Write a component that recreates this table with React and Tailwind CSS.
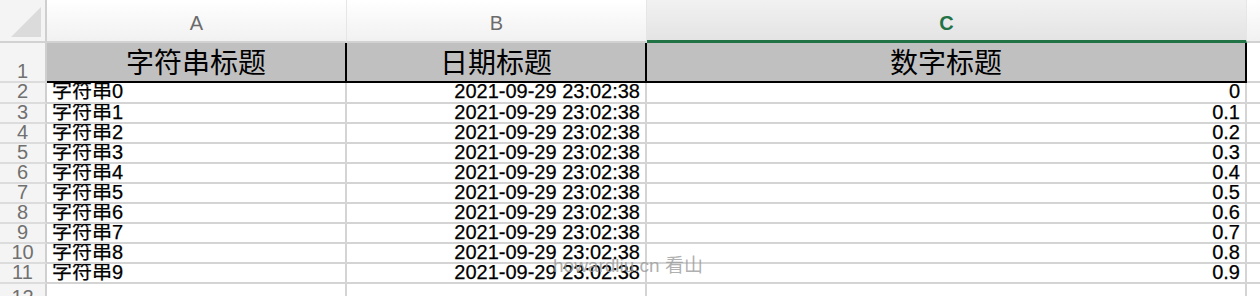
const font = { fontFamily: '"Liberation Sans", "Noto Sans CJK SC", sans-serif' };

const rows = Array.from({ length: 10 }, (_, i) => ({
  n: i + 2,
  s: `字符串${i}`,
  d: "2021-09-29 23:02:38",
  v: i === 0 ? "0" : `0.${i}`,
}));

const ColHead = ({ label, active }) => (
  <div
    className={
      active
        ? "w-[600px] h-full flex justify-center pt-[13px] bg-gradient-to-b from-[#f1f1f1] to-[#e4e4e4] border-b-[3px] border-[#217346] border-r border-r-[#e6e6e6]"
        : "w-[300px] h-full flex justify-center pt-[13px] bg-gradient-to-b from-[#ffffff] to-[#f1f1f1] border-b-2 border-b-[#d2d2d2] border-r border-r-[#e6e6e6]"
    }
  >
    <span
      className={
        active
          ? "text-[20px] leading-[20px] font-bold text-[#217346]"
          : "text-[20px] leading-[20px] text-[#6b6b6b]"
      }
    >
      {label}
    </span>
  </div>
);

const cellText = "text-[20px] leading-[16px] text-black whitespace-nowrap [-webkit-text-stroke:0.25px_black]";

const DataRow = ({ r, first }) => (
  <div className={first ? "flex h-[21px]" : "flex h-[20px]"}>
    <div className="w-[47px] bg-[#f4f4f4] border-r-2 border-r-[#cfcfcf] border-b-2 border-b-[#dcdcdc] overflow-hidden flex justify-center">
      <span className="text-[20px] leading-[16px] text-[#707070]">{r.n}</span>
    </div>
    <div className="w-[300px] border-r-2 border-b-2 border-[#d4d4d4] overflow-hidden pl-[5px]">
      <div className={cellText}>{r.s}</div>
    </div>
    <div className="w-[300px] border-r-2 border-b-2 border-[#d4d4d4] overflow-hidden pr-[5px] text-right">
      <div className={cellText}>{r.d}</div>
    </div>
    <div className="w-[600px] border-r-2 border-b-2 border-[#d4d4d4] overflow-hidden pr-[5px] text-right">
      <div className={cellText}>{r.v}</div>
    </div>
    <div className="flex-1 border-b-2 border-[#d4d4d4]" />
  </div>
);

export default function App() {
  return (
    <div className="relative w-[1260px] h-[296px] overflow-hidden bg-white" style={font}>
      {/* column letters */}
      <div className="flex h-[43px]">
        <div className="w-[47px] h-full bg-[#f4f4f4] border-r-2 border-r-[#cfcfcf] border-b-2 border-b-[#d2d2d2] flex items-end justify-end pr-[4px] pb-[4px]">
          <svg width="30" height="30" viewBox="0 0 30 30">
            <polygon points="30,0 30,30 0,30" fill="#dbdbdb" />
          </svg>
        </div>
        <ColHead label="A" />
        <ColHead label="B" />
        <ColHead label="C" active />
        <div className="flex-1 h-full bg-gradient-to-b from-[#ffffff] to-[#f1f1f1] border-b-2 border-b-[#d2d2d2]" />
      </div>

      {/* header row */}
      <div className="flex h-[40px]">
        <div className="w-[47px] bg-[#f4f4f4] border-r-2 border-r-[#cfcfcf] border-b-2 border-b-[#dcdcdc] flex items-end justify-center pb-[3px]">
          <span className="text-[20px] leading-[14px] text-[#707070]">1</span>
        </div>
        {["字符串标题", "日期标题", "数字标题"].map((t, i) => (
          <div
            key={t}
            className={
              i === 2
                ? "w-[600px] bg-[#c0c0c0] border-r-2 border-b-2 border-black flex items-end justify-center pb-[3px]"
                : "w-[300px] bg-[#c0c0c0] border-r-2 border-b-2 border-black flex items-end justify-center pb-[3px]"
            }
          >
            <span className="text-[28px] leading-[28px] text-black">{t}</span>
          </div>
        ))}
        <div className="flex-1 border-b-2 border-[#d4d4d4]" />
      </div>

      {rows.map((r, i) => (
        <DataRow key={r.n} r={r} first={i === 0} />
      ))}

      {/* row 12 */}
      <div className="flex h-[20px]">
        <div className="w-[47px] bg-[#f4f4f4] border-r-2 border-r-[#cfcfcf] flex justify-center pt-[6px]">
          <span className="text-[20px] leading-[14px] text-[#707070]">12</span>
        </div>
        <div className="w-[300px] border-r-2 border-[#d4d4d4]" />
        <div className="w-[300px] border-r-2 border-[#d4d4d4]" />
        <div className="w-[600px] border-r-2 border-[#d4d4d4]" />
        <div className="flex-1" />
      </div>

      {/* watermark */}
      <div className="absolute left-[553px] top-[255px] text-[19px] leading-[22px] text-[#9a9a9a]/80 whitespace-nowrap">
        howardliu.cn 看山
      </div>
    </div>
  );
}
